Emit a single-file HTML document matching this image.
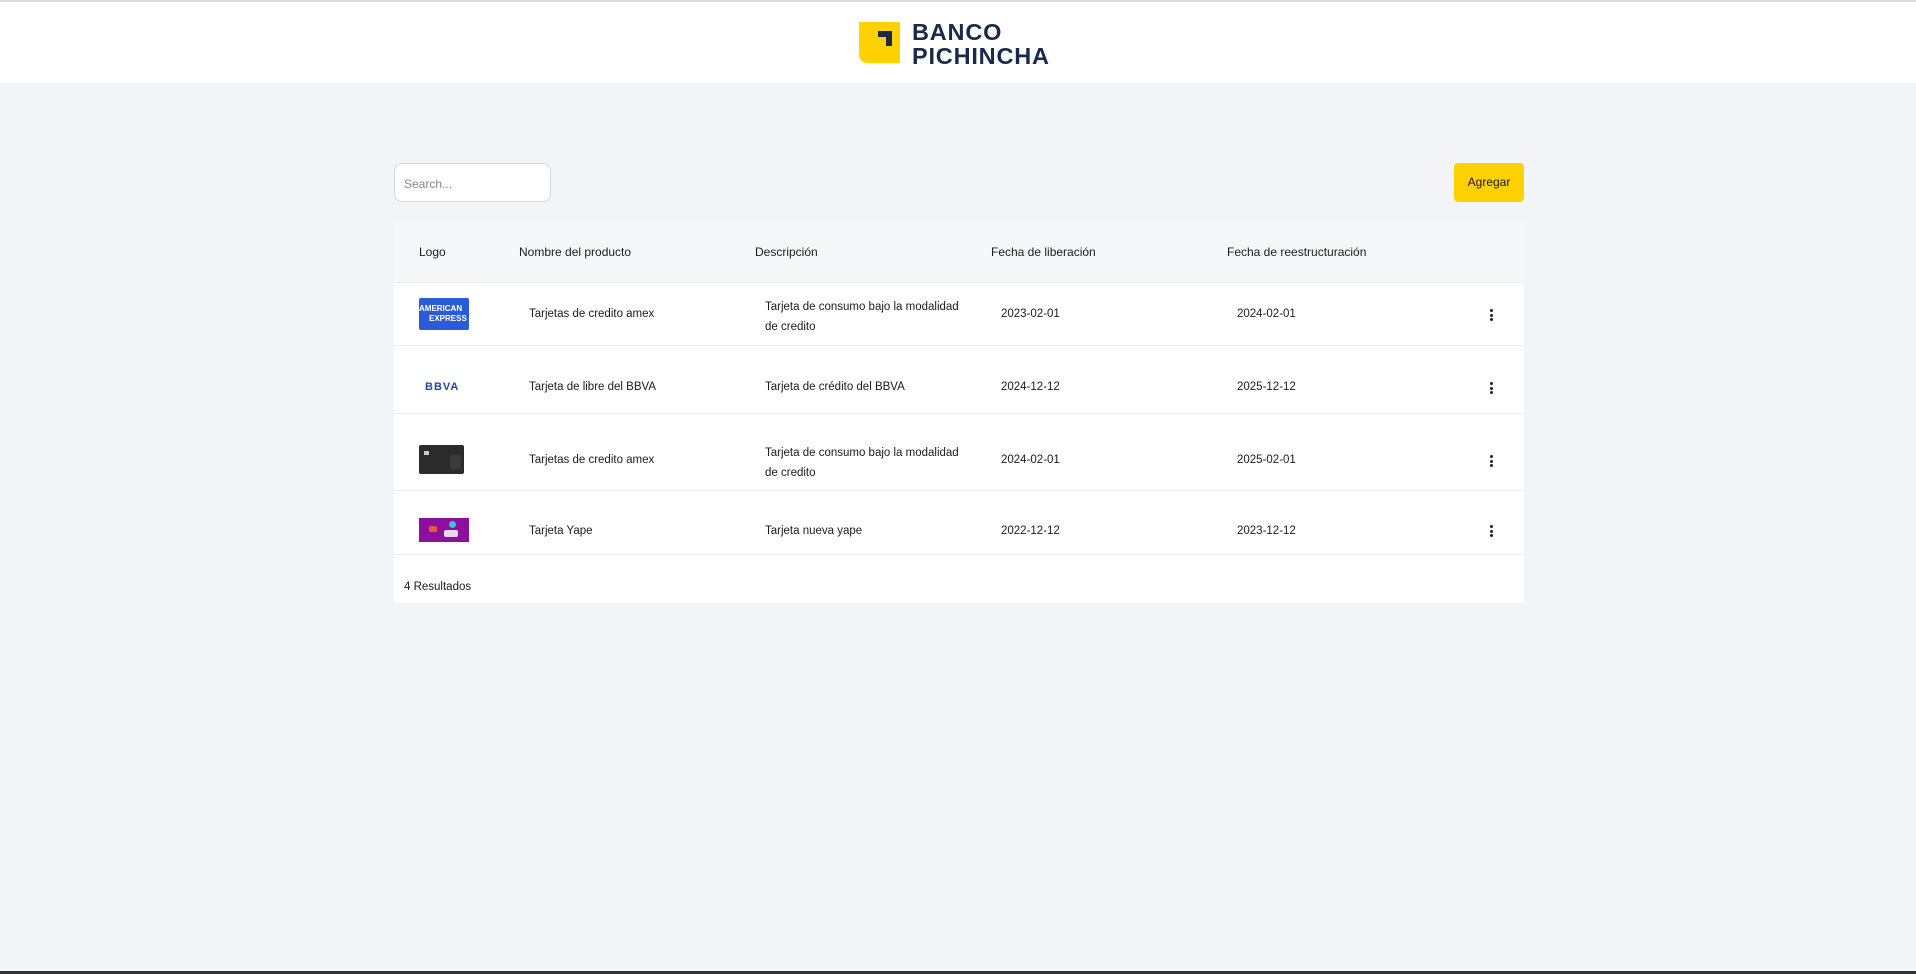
<!DOCTYPE html><html><head><meta charset="utf-8"><style>
*{margin:0;padding:0;box-sizing:border-box}
body{width:1916px;height:974px;background:#f3f4f7;font-family:"Liberation Sans",sans-serif;color:#1b1b1b;position:relative;overflow:hidden;font-size:11.5px}
.hdr{position:absolute;left:0;top:0;width:1916px;height:83px;background:#fff;border-top:2px solid #ddd}
.a{position:absolute;white-space:nowrap}
.tbl{position:absolute;left:394px;top:223px;width:1130px;height:380px;background:#fff}
.th{position:absolute;left:0;top:0;width:1130px;height:59px;background:#f6f7f9}
.ln{position:absolute;left:0;width:1130px;height:1px;background:#eceef1}
.dots{position:absolute;width:3px}
.dots i{display:block;width:3px;height:3px;border-radius:50%;background:#222;margin-bottom:1.5px}
</style></head><body>
<div class="hdr">
<svg class="a" style="left:859px;top:20px" width="42" height="42" viewBox="0 0 42 42"><path d="M0 0H41V41H8A8 8 0 0 1 0 33Z" fill="#ffd100"/><path d="M19 9H33V24H27V15H19Z" fill="#1b2a4a"/></svg>
<div class="a" style="left:912px;top:18px;font-size:23.5px;font-weight:bold;color:#1b2a4a;line-height:24px;letter-spacing:0.8px">BANCO<br>PICHINCHA</div>
</div>
<div class="a" style="left:394px;top:163px;width:157px;height:39px;background:#fff;border:1px solid #d6d6d6;border-radius:8px;color:#888;font-size:12px;padding:13px 0 0 9px">Search...</div>
<div class="a" style="left:1454px;top:163px;width:70px;height:39px;background:#ffd100;border-radius:4px;font-size:12px;text-align:center;line-height:39px">Agregar</div>
<div class="tbl">
<div class="th"></div>
<div class="ln" style="top:59px"></div><div class="ln" style="top:122px"></div><div class="ln" style="top:190px"></div><div class="ln" style="top:267px"></div><div class="ln" style="top:331px"></div>
<div class="a" style="left:25px;top:22px;font-size:12px">Logo</div>
<div class="a" style="left:125px;top:22px;font-size:12px">Nombre del producto</div>
<div class="a" style="left:361px;top:22px;font-size:12px">Descripción</div>
<div class="a" style="left:597px;top:22px;font-size:12px">Fecha de liberación</div>
<div class="a" style="left:833px;top:22px;font-size:12px">Fecha de reestructuración</div>
<div class="a" style="left:25px;top:75px;width:50px;height:32px;background:#2b5bd7;border-radius:2px;color:#fff;font-size:8px;font-weight:bold;line-height:10px;padding-top:6px">AMERICAN<br><span style="padding-left:10px">EXPRESS</span></div>
<div class="a" style="left:135px;top:85px">Tarjetas de credito amex</div>
<div class="a" style="left:371px;top:74px;line-height:20px">Tarjeta de consumo bajo la modalidad<br>de credito</div>
<div class="a" style="left:607px;top:85px">2023-02-01</div>
<div class="a" style="left:843px;top:85px">2024-02-01</div>
<div class="dots" style="left:1096px;top:86px"><i></i><i></i><i></i></div>
<div class="a" style="left:31px;top:158px;color:#1a4b9b;font-weight:bold;font-size:11px;letter-spacing:1px">BBVA</div>
<div class="a" style="left:135px;top:158px">Tarjeta de libre del BBVA</div>
<div class="a" style="left:371px;top:158px">Tarjeta de crédito del BBVA</div>
<div class="a" style="left:607px;top:158px">2024-12-12</div>
<div class="a" style="left:843px;top:158px">2025-12-12</div>
<div class="dots" style="left:1096px;top:159px"><i></i><i></i><i></i></div>
<div class="a" style="left:25px;top:222px;width:45px;height:29px;background:#2b2b2b;border-radius:2px"><div style="position:absolute;left:5px;top:6px;width:5px;height:4px;background:#ccc"></div><div style="position:absolute;left:31px;top:10px;width:11px;height:14px;background:#3a3a3a"></div></div>
<div class="a" style="left:135px;top:231px">Tarjetas de credito amex</div>
<div class="a" style="left:371px;top:220px;line-height:20px">Tarjeta de consumo bajo la modalidad<br>de credito</div>
<div class="a" style="left:607px;top:231px">2024-02-01</div>
<div class="a" style="left:843px;top:231px">2025-02-01</div>
<div class="dots" style="left:1096px;top:232px"><i></i><i></i><i></i></div>
<div class="a" style="left:25px;top:295px;width:50px;height:24px;background:#8e0e9e"><div style="position:absolute;left:10px;top:8px;width:8px;height:6px;background:#e85a3a;border-radius:2px"></div><div style="position:absolute;left:30px;top:3px;width:7px;height:7px;background:#3ec1d0;border-radius:50%"></div><div style="position:absolute;left:25px;top:12px;width:14px;height:7px;background:#e8d7ee;border-radius:2px"></div></div>
<div class="a" style="left:135px;top:302px">Tarjeta Yape</div>
<div class="a" style="left:371px;top:302px">Tarjeta nueva yape</div>
<div class="a" style="left:607px;top:302px">2022-12-12</div>
<div class="a" style="left:843px;top:302px">2023-12-12</div>
<div class="dots" style="left:1096px;top:302px"><i></i><i></i><i></i></div>
<div class="a" style="left:10px;top:358px">4 Resultados</div>
</div>
<div class="a" style="left:0;top:971px;width:1916px;height:3px;background:#333"></div>
</body></html>
